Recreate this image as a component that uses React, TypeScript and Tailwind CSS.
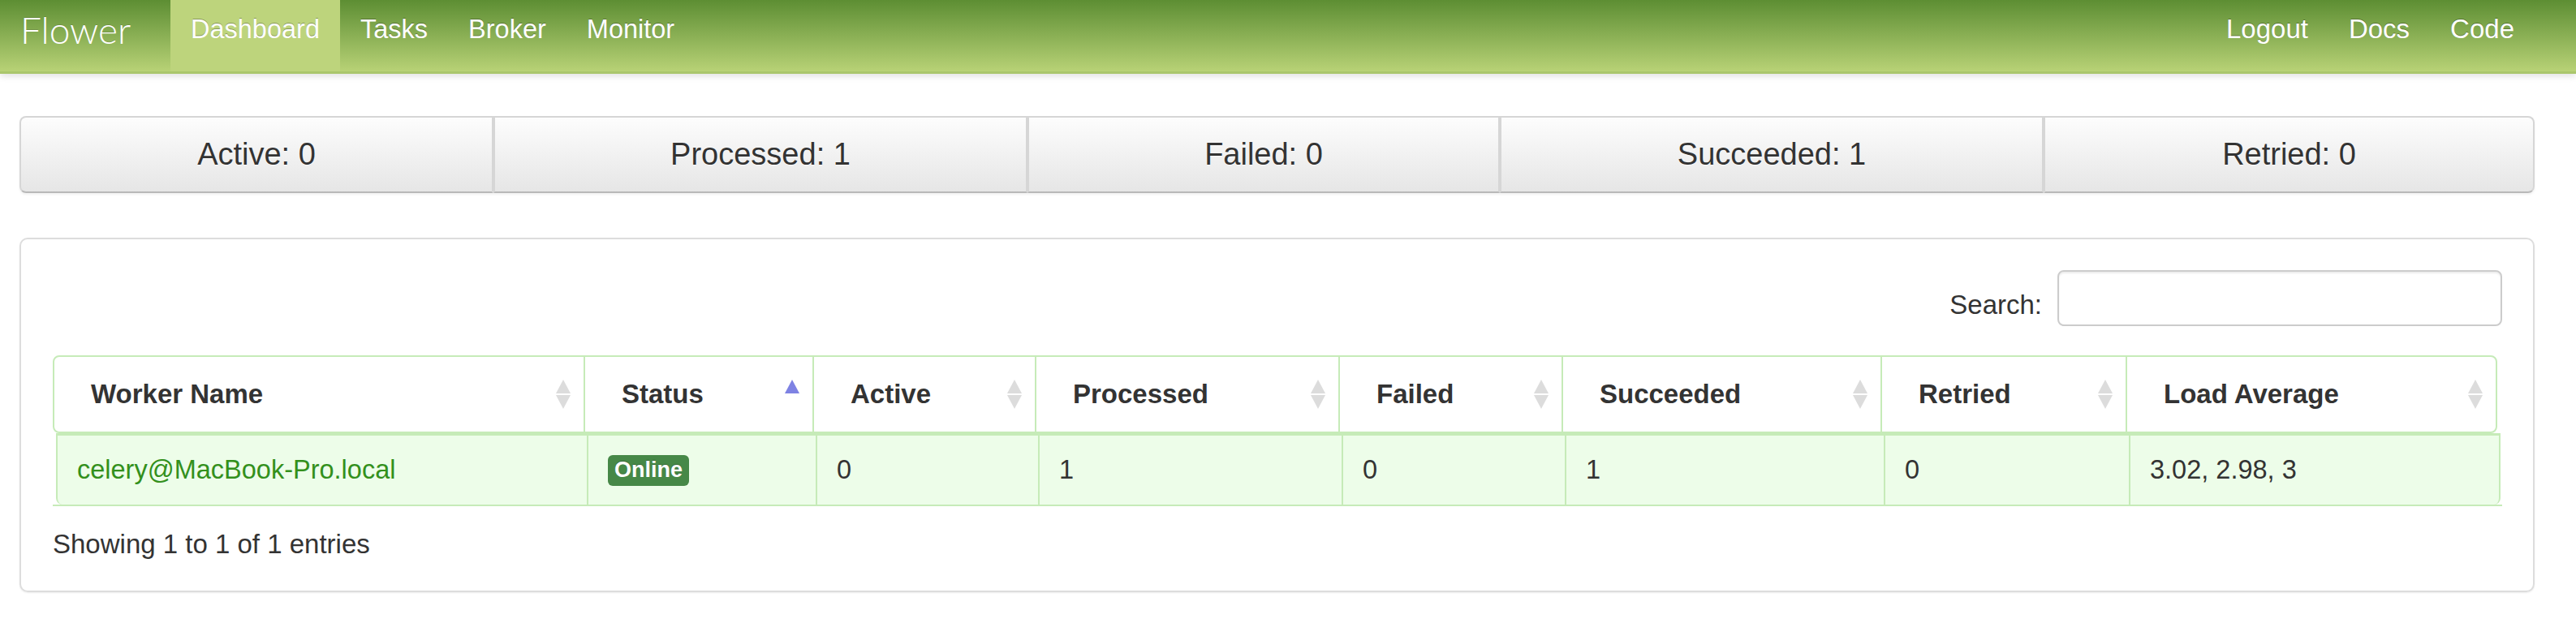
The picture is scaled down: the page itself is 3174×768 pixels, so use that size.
import React from "react";

const NAV_LEFT = ["Dashboard", "Tasks", "Broker", "Monitor"];
const NAV_RIGHT = ["Logout", "Docs", "Code"];

const STATS = [
  { label: "Active: 0", w: "w-[584px]", round: "rounded-l-[8px]" },
  { label: "Processed: 1", w: "w-[658px]", round: "" },
  { label: "Failed: 0", w: "w-[582px]", round: "" },
  { label: "Succeeded: 1", w: "w-[670px]", round: "" },
  { label: "Retried: 0", w: "flex-1", round: "rounded-r-[8px]" },
];

const COLUMNS = [
  { title: "Worker Name", w: "w-[652px]", sort: "both" },
  { title: "Status", w: "w-[282px]", sort: "asc" },
  { title: "Active", w: "w-[274px]", sort: "both" },
  { title: "Processed", w: "w-[374px]", sort: "both" },
  { title: "Failed", w: "w-[275px]", sort: "both" },
  { title: "Succeeded", w: "w-[393px]", sort: "both" },
  { title: "Retried", w: "w-[302px]", sort: "both" },
  { title: "Load Average", w: "w-[456px]", sort: "both" },
];

const ROW = ["celery@MacBook-Pro.local", "Online", "0", "1", "0", "1", "0", "3.02, 2.98, 3"];

function SortIcon({ mode }: { mode: string }) {
  return (
    <svg width="20" height="38" viewBox="0 0 20 38" className="absolute right-[15px] top-1/2 -translate-y-1/2">
      {mode === "asc" ? (
        <path d="M10 1 L19 18 L1 18 Z" fill="#7e82e3" />
      ) : (
        <>
          <path d="M10 1 L19 18 L1 18 Z" fill="#dcdcdc" />
          <path d="M1 20 L19 20 L10 37 Z" fill="#dcdcdc" />
        </>
      )}
    </svg>
  );
}

export default function App() {
  return (
    <div className="min-h-screen bg-white text-[#333333] font-['Liberation_Sans',Arial,sans-serif]">
      {/* navbar */}
      <div className="h-[91px] border-b-[3px] border-[#aac66c] bg-gradient-to-b from-[#5d8e33] to-[#b8d276] shadow-[0_3px_8px_rgba(0,0,0,0.12)]">
        <div className="flex justify-between pl-[24px] pr-[51px]">
          <div className="flex">
            <div className="w-[186px] h-[88px] pb-[16px] flex items-center pl-[1px] text-[46px] font-light text-white font-['Lato',sans-serif] [text-shadow:0_-1px_0_rgba(0,0,0,0.12)]">
              Flower
            </div>
            {NAV_LEFT.map((item) => (
              <div
                key={item}
                className={`h-[88px] px-[25px] pb-[16px] flex items-center text-[32.5px] text-white [text-shadow:0_-1px_0_rgba(0,0,0,0.3)] ${
                  item === "Dashboard" ? "bg-[#bdd47c]" : ""
                }`}
              >
                {item}
              </div>
            ))}
          </div>
          <div className="flex">
            {NAV_RIGHT.map((item) => (
              <div
                key={item}
                className="h-[88px] px-[25px] pb-[16px] flex items-center text-[33px] text-white [text-shadow:0_-1px_0_rgba(0,0,0,0.3)]"
              >
                {item}
              </div>
            ))}
          </div>
        </div>
      </div>

      <div className="pl-[24px] pr-[51px]">
        {/* counters */}
        <div className="mt-[52px] flex h-[95px] shadow-[0_2px_3px_rgba(0,0,0,0.06)] rounded-[8px]">
          {STATS.map((s) => (
            <div
              key={s.label}
              className={`${s.w} ${s.round} h-full border-2 border-[#d6d6d6] border-b-[#b9b9b9] bg-gradient-to-b from-[#fdfdfd] to-[#e6e6e6] flex items-center justify-center text-[38px] [text-shadow:0_1px_1px_rgba(255,255,255,0.75)]`}
            >
              {s.label}
            </div>
          ))}
        </div>

        {/* workers panel */}
        <div className="mt-[55px] border-2 border-[#dddddd] rounded-[10px] shadow-[0_1px_2px_rgba(0,0,0,0.08)] pl-[39px] pr-[38px] pt-[38px] pb-[34px]">
          <div className="flex justify-end items-center">
            <span className="text-[33px] pt-[16px] mr-[19px]">Search:</span>
            <div className="w-[548px] h-[69px] border-2 border-[#cccccc] rounded-[8px] bg-white shadow-[inset_0_2px_2px_rgba(0,0,0,0.075)]" />
          </div>

          <div className="mt-[36px] w-[3018px] border-b-2 border-[#c6ebb8]">
            {/* header */}
            <div className="w-[3012px] h-[96px] flex border-2 border-[#c6ebb8] rounded-[8px] bg-white">
              {COLUMNS.map((c, i) => (
                <div
                  key={c.title}
                  className={`${c.w} relative h-full flex items-center pl-[45px] text-[33px] font-bold ${
                    i > 0 ? "border-l-2 border-[#c6ebb8]" : ""
                  }`}
                >
                  {c.title}
                  <SortIcon mode={c.sort} />
                </div>
              ))}
            </div>

            {/* row */}
            <div className="ml-[4px] w-[3012px] h-[88px] flex border-t-[3px] border-x-2 border-[#c6ebb8] rounded-b-[8px] bg-[#edfde9]">
              {ROW.map((v, i) => (
                <div
                  key={i}
                  className={`${COLUMNS[i].w} h-full flex items-center pl-[24px] text-[32.5px] ${
                    i > 0 ? "border-l-2 border-[#c6ebb8]" : ""
                  }`}
                >
                  {i === 0 ? (
                    <span className="text-[#33901c]">{v}</span>
                  ) : i === 1 ? (
                    <span className="h-[38px] px-[8px] flex items-center rounded-[6px] bg-[#468847] text-white font-bold text-[27px] [text-shadow:0_-1px_0_rgba(0,0,0,0.25)]">
                      {v}
                    </span>
                  ) : (
                    v
                  )}
                </div>
              ))}
            </div>
          </div>

          <div className="mt-[24px] leading-[46px] text-[33px]">Showing 1 to 1 of 1 entries</div>
        </div>
      </div>
    </div>
  );
}
